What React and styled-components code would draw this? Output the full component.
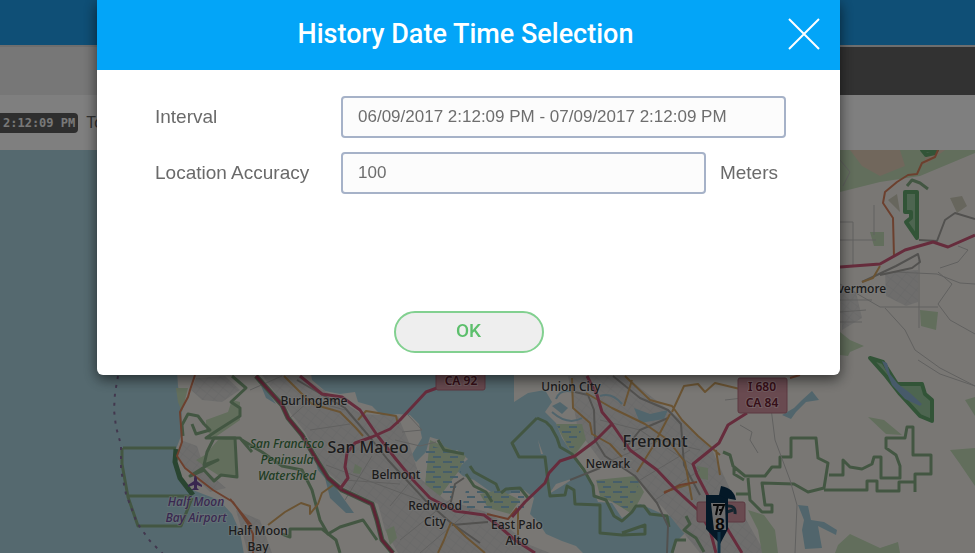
import { useState } from 'react'
import styled, { createGlobalStyle } from 'styled-components'

const GlobalStyle = createGlobalStyle`
    * {
        box-sizing: border-box;
    }
    body {
        margin: 0;
        font-family: "Liberation Sans", Arial, sans-serif;
    }
`
const Page = styled.div`
    display: flex;
    flex-direction: column;
    height: 100vh;
    overflow: hidden;
`
const TopBar = styled.header`
    flex: 0 0 45px;
    background-color: #1e9eec;
`
const Tabs = styled.div`
    flex: 0 0 50px;
    display: flex;
    border-top: 2px solid #dcdcdc;
`
const Tab = styled.div`
    flex: 1;
    background-color: ${props => props.$active ? "#eeeeee" : "#646464"};
`
const RangeBar = styled.div`
    flex: 0 0 55px;
    display: flex;
    align-items: center;
    gap: 8px;
    background-color: #ffffff;
    color: #666;
    font-size: 16px;
`
const Stamp = styled.code`
    padding: 0 3px;
    border-radius: 0 4px 4px 0;
    background-color: #5c5c5c;
    color: #f0f0f0;
    font-family: "DejaVu Sans Mono", monospace;
    font-size: 12px;
    font-weight: 700;
    line-height: 20px;
`
const MapArea = styled.main`
    flex: 1;
    min-height: 0;
    background-color: #aad3df;
`
const MapSvg = styled.svg`
    display: block;
    width: 100%;
    height: 100%;
`
const Place = styled.text`
    font-family: "Noto Sans", sans-serif;
    font-size: ${props => props.$size || 12}px;
    font-style: ${props => props.$italic ? "italic" : "normal"};
    font-weight: ${props => props.$bold ? 600 : 500};
    fill: ${props => props.$color || "#383838"};
    stroke: rgba(255, 255, 255, 0.35);
    stroke-width: 2px;
    paint-order: stroke;
    text-anchor: middle;
`
const Backdrop = styled.div`
    position: fixed;
    inset: 0;
    padding: 0 135px 0 97px;
    background-color: rgba(0, 0, 0, 0.5);
`
const Dialog = styled.form`
    border-radius: 0 0 6px 6px;
    background-color: #ffffff;
    box-shadow: 0 4px 14px rgba(0, 0, 0, 0.6);
    overflow: hidden;
`
const DialogHeader = styled.div`
    display: grid;
    grid-template-columns: 60px 1fr 60px;
    align-items: center;
    height: 70px;
    padding: 0 6px 2px 0;
    background-color: #03a5f8;
    color: #ffffff;
`
const Title = styled.h1`
    grid-column: 2;
    margin: 0;
    font-family: Roboto, sans-serif;
    font-size: 27px;
    font-weight: 500;
    line-height: 32px;
    text-align: center;
`
const CloseButton = styled.button`
    display: flex;
    justify-content: center;
    padding: 0;
    border: none;
    background: none;
    color: inherit;
    cursor: pointer;
`
const DialogBody = styled.div`
    padding: 26px 0 22px;
`
const Fields = styled.div`
    display: grid;
    grid-template-columns: 186px 1fr;
    align-items: center;
    row-gap: 14px;
    padding: 0 54px 0 58px;
    color: #6a6a6a;
    font-size: 19px;
`
const Label = styled.label``
const Field = styled.div`
    display: flex;
    align-items: center;
    gap: 14px;
`
const Input = styled.input`
    flex: 0 0 ${props => props.$short ? "82%" : "100%"};
    min-width: 0;
    height: 42px;
    padding: 0 15px;
    border: 2px solid #a6b2c8;
    border-radius: 4px;
    background-color: #fcfcfc;
    color: #6e6e6e;
    font-family: inherit;
    font-size: 17px;
`
const Unit = styled.span``
const Actions = styled.div`
    display: flex;
    justify-content: center;
    margin-top: 117px;
`
const OkButton = styled.button`
    width: 150px;
    height: 42px;
    padding: 0 0 3px;
    border: 2px solid #82d090;
    border-radius: 21px;
    background-color: #eeeeee;
    color: #5cbf6c;
    font-family: Roboto, sans-serif;
    font-size: 19px;
    font-weight: 500;
    cursor: pointer;
`

const LAND = [
    // peninsula
    "M175 340 L178 386 L182 405 L181 436 L175 452 L178 472 L188 488 L203 494 L219 500 L232 514 L240 532 L245 560 L590 560 L576 546 L562 541 L546 534 L538 522 L530 514 L534 498 L524 490 L508 494 L500 498 L488 490 L474 480 L463 476 L456 470 L468 459 L457 450 L448 455 L440 440 L430 437 L426 452 L416 462 L411 456 L422 438 L419 424 L410 415 L398 414 L382 416 L372 406 L358 402 L355 392 L340 394 L325 391 L312 380 L305 340 Z",
    // east bay
    "M514 340 L514 402 L528 393 L545 390 L552 402 L545 412 L556 423 L562 438 L570 450 L580 468 L590 480 L598 502 L612 503 L622 518 L632 512 L640 504 L667 516 L684 515 L688 530 L676 542 L672 560 L990 560 L990 140 L820 140 L820 340 Z",
    "M549 494 L556 484 L574 478 L562 486 Z",
    "M538 440 L543 454 L541 454 Z",
]
const URBAN = [
    "M262 375 L300 376 L340 400 L362 414 L398 416 L408 440 L420 478 L445 500 L490 513 L530 545 L550 553 L398 553 L385 530 L378 504 L345 488 L325 470 L305 432 L282 402 Z",
    "M196 378 L225 376 L240 390 L222 402 L202 400 L191 390 Z",
    "M181 440 L197 446 L205 470 L226 488 L210 492 L186 468 L178 456 Z",
    "M236 510 L260 520 L272 553 L248 553 Z",
    "M568 376 L625 376 L684 422 L712 450 L735 500 L765 553 L700 553 L665 510 L625 468 L600 460 L578 430 Z",
    "M885 272 L918 270 L918 302 L906 306 L886 296 Z",
    "M840 284 L856 292 L862 318 L842 330 Z",
]
const WOODS = [
    "M206 420 L228 412 L232 400 L240 402 L240 420 L214 438 L206 430 Z",
    "M205 455 L218 440 L234 438 L236 478 L218 475 L207 468 L196 460 Z",
    "M176 388 L188 388 L182 412 L178 402 Z",
    "M840 150 L975 150 L975 153 L920 176 L880 182 L840 192 Z",
    "M868 417 L884 420 L902 435 L886 434 Z",
    "M965 400 L975 397 L975 416 Z",
    "M950 450 L975 448 L975 486 L960 464 Z",
    "M748 510 L764 515 L775 530 L778 553 L762 553 L758 530 Z",
    "M838 545 L850 534 L880 548 L898 542 L900 553 L835 553 Z",
    "M870 232 L884 232 L884 246 L874 246 Z",
    "M920 310 L938 312 L936 330 L921 326 Z",
    "M840 332 L850 340 L864 346 L850 352 L848 356 L840 355 Z",
    "M556 424 L582 424 L586 440 L574 456 L566 444 Z",
    "M596 480 L635 476 L644 492 L632 514 L616 504 L600 496 Z",
    "M430 440 L466 456 L458 472 L440 496 L425 484 Z",
    "M480 494 L500 490 L520 500 L510 514 L488 508 Z",
    "M386 530 L394 526 L397 538 L390 545 Z",
    "M697 466 L708 468 L708 480 L699 478 Z",
    "M355 464 L362 468 L360 474 L353 473 Z",
]
const PARK_LINES = [
    "M123 448 H176 M122 448 L122 464 L128 497 L138 526 H181 L192 498 M128 496 H190",
    "M232 376 L246 388 L231 402 L240 408 L240 416 L218 430 L206 438 L240 438 L252 452",
    "M183 436 L182 425 L188 414 L198 416 L204 424 L210 430 L196 434 L192 424",
    "M190 476 L206 466 L218 460 L204 465 L207 452 L214 438 H235 L237 477 L221 475 L214 481 L204 470 Z",
    "M242 440 L262 452 L282 466 L302 470 L312 490 L320 520 L328 534 L340 527 L363 520 L377 540",
    "M282 534 L290 537 L290 529 L322 529 L336 540 L340 553",
    "M470 466 L474 472 L496 484 L499 491 M501 493 L506 489 L520 488 L528 498",
    "M466 474 L474 486 L486 492 L492 502 M438 440 L444 450 L464 454",
    "M537 418 L512 443 L519 457 L545 457 L548 482 L550 496 L565 495 L567 486 L574 490 L575 504 L600 505 L600 533 L622 535 L645 534 L645 525 L622 533",
    "M537 418 L546 422 L551 427 L557 438 L560 447 L572 454 L584 470 L593 486 L594 496 L606 500 L614 516 L622 521 L632 512 L636 506 L644 506 L650 514 L667 516 L669 527",
    "M686 516 L690 524 L684 530 L696 538 L704 552 M672 553 L676 540 L686 540",
    "M723 452 L730 455 L733 466 L745 476 H765 L772 467 L780 467 L780 457 H791 V438 H816 L818 458 L828 463 L824 488 L808 492 L794 484 L762 483 L765 505 H772 V512 H762 L750 500 L748 478 M734 466 L734 474 L744 480 M736 494 H750",
    "M829 475 H843 V460 L850 467 L862 469 L872 464 L874 457 H881 V478 H900 V466 L896 455 L886 448 V438 H905 L907 427 H913 V455 H931 V474 H915 V492 M914 482 H899 V491 H877 V481 H867 V490 H824",
    "M907 186 L912 180 L920 183 L928 189",
]
const LAKES = [
    "M782 415 L794 408 L802 400 L812 391 L819 400 L806 402 L796 412 L791 419 Z",
    "M798 505 L808 506 L811 520 L824 522 L837 530 L836 535 L818 526 L822 548 L805 549 L802 530 L804 520 Z",
    "M325 478 L336 488 L354 513 L346 513 L330 498 Z",
    "M314 455 L320 462 L328 482 L318 470 Z",
    "M257 376 L276 404 L266 398 Z",
    "M634 408 L650 414 L668 410 L664 419 L640 423 Z",
    "M552 406 L560 402 L568 408 L562 414 Z",
]
const STREETS = "M288 420 L310 400 L345 410 M310 430 L350 424 M326 465 L420 500 M344 480 L400 484 M372 456 L345 500 M390 506 L420 470 M400 540 L450 500 M420 553 L470 510 M250 390 L282 376 M408 415 L422 430 L402 432 M395 440 L420 446 L436 442 M600 420 L640 430 L700 470 M612 460 L660 440 L700 450 M640 480 L690 450 M655 500 L700 470 M740 425 L752 432 L750 440 L758 453 M770 400 L775 440 L790 480 L797 505 L795 553 M725 400 L770 395 M840 222 H853 V265 M840 240 H876 M874 205 V235 M840 284 L868 300 L880 307 H938 M895 272 L937 274 L960 283 L975 284 M919 260 V328 M885 308 L905 330 L915 350 L940 368 L975 386 M938 272 L952 284 L938 304 L950 320 L975 334 M940 268 L958 262 L968 250 L958 246 M840 300 H872 M840 312 L866 310 M840 322 H862 M840 160 L850 172 L843 186 M918 360 L940 374 L975 386"
const RAILS = "M297 380 L345 408 L368 435 L388 460 L425 500 L450 522 L480 543 M575 392 L588 395 L594 410 L595 440 L605 456 L635 476 L657 503 L668 526 L667 553 M613 376 L640 398 L668 410 L681 424 L684 465 L700 495 M624 450 L640 430 L668 418 M862 282 L896 266 L918 254 L920 262 L912 268 L880 275 M919 240 L937 241 L945 220 L955 213 L975 219 M452 525 L488 522 M450 506 L455 484 L464 478 M570 480 L600 468"
const MINOR_ROADS = "M284 376 L312 404 L340 412 L356 428 L363 436 M358 420 L366 411 L396 416 L398 424 M268 525 L285 512 L301 503 L310 506 L310 514 L318 504 L322 493 L336 483 M451 522 L444 540 L438 553 M453 524 L466 537 L485 553 M572 378 L573 408 L590 423 L592 434 L610 444 L622 457 M586 393 L612 408 L645 424 L668 440 L685 462 L692 500 M625 376 L650 400 L672 406 L682 420 L698 436 L720 455 M632 380 L624 406 M670 414 L652 448 L637 472 M672 412 L684 386 L698 384 L705 392 L715 383 L740 389 M664 492 L690 484 M862 282 L873 278 L880 266 M716 450 L720 475 M518 510 L518 535"
const SECONDARY_ROADS = "M195 375 L190 390 L188 397 L180 412 L181 426 L182 442 L177 456 L185 468 L200 480 L213 490 L233 502 L248 524 L253 534 L253 553 M230 499 L252 526 M938 150 L935 157 L922 163 L917 174 L908 175 L897 182 L885 192 L883 203 L893 218 L894 257 M487 514 L508 519 L517 508 M664 493 L680 485 L697 482 M790 378 L800 375"
const MOTORWAYS = "M300 376 L322 394 L342 397 L360 410 L377 435 L395 458 L413 480 L430 498 L455 511 L484 515 L500 527 L515 540 L535 553 M437 388 L426 392 L400 420 L390 429 L372 437 L355 443 L347 453 L345 467 L348 478 L340 489 M587 376 L597 395 L602 412 L612 424 L630 450 L657 470 L675 489 L698 510 L710 530 L716 553 M612 424 L595 441 L575 456 L560 461 L549 473 L545 483 L525 502 L512 517 M747 413 L728 425 L719 443 L693 464 L697 475 L708 496 L725 525 L742 553 M840 267 L880 264 L905 250 L933 242 L948 247 L975 235"
const SKYLINE_FREEWAY = "M256 376 L282 405 L288 418 L302 435 L318 462 L328 478 L342 490 L355 496 L372 504 L377 520 L382 540 L393 553"

const LINE_STEP = 16

const places = [
    { x: 314, y: 405, lines: ["Burlingame"] },
    { x: 368, y: 453, lines: ["San Mateo"], size: 16 },
    { x: 396, y: 479, lines: ["Belmont"] },
    { x: 435, y: 510, lines: ["Redwood", "City"] },
    { x: 517, y: 529, lines: ["East Palo", "Alto"] },
    { x: 571, y: 391, lines: ["Union City"] },
    { x: 655, y: 447, lines: ["Fremont"], size: 16 },
    { x: 608, y: 468, lines: ["Newark"] },
    { x: 258, y: 535, lines: ["Half Moon", "Bay"] },
    { x: 857, y: 293, lines: ["Livermore"] },
    { x: 287, y: 448, lines: ["San Francisco", "Peninsula", "Watershed"], color: "#3d7a44", italic: true },
    { x: 196, y: 506, lines: ["Half Moon", "Bay Airport"], color: "#7350a0", italic: true },
]

const Shields = () => (
    <g>
        <g fill="#d294a0" stroke="#b87080">
            <rect x="436" y="366" width="49" height="24" rx="2" />
            <rect x="738" y="378" width="49" height="35" rx="2" />
            <rect x="697" y="502" width="48" height="20" rx="2" />
        </g>
        <Place x="461" y="385" $bold $color="#6e1c30">CA 92</Place>
        <Place x="762" y="391" $bold $color="#6e1c30">I 680</Place>
        <Place x="762" y="407" $bold $color="#6e1c30">CA 84</Place>
    </g>
)

const VehiclePin = () => (
    <g>
        <path d="M727 506 Q736 505 735 514 M727 512 L733 510" fill="none" stroke="#2a4a5c" strokeWidth="3" />
        <path d="M706 495 H728 V529 L720 544 L706 529 Z" fill="#08304e" />
        <path d="M719 495 L721 486 Q734 488 736 500 L725 498 Z" fill="#08304e" />
        <path d="M719 532 V553" stroke="#286c92" strokeWidth="3" />
        <path d="M711 503 H725 L726 530 H714 Z" fill="#d8d8d8" />
        <path d="M713 505 H718 L716 515 M718 505 H724 L720 515 M719 510 H723" fill="none" stroke="#111111" strokeWidth="2" />
        <text x="720" y="530" textAnchor="middle" fontFamily="Liberation Sans, sans-serif" fontSize="17" fontWeight="700" fill="#111111">8</text>
    </g>
)

const BayMap = () => (
    <MapSvg viewBox="0 150 975 403" preserveAspectRatio="xMidYMin slice" role="img" aria-label="Map">
        <defs>
            <pattern id="blocks" width="9" height="7" patternUnits="userSpaceOnUse" patternTransform="rotate(38)">
                <rect width="9" height="7" fill="#dcdbd9" />
                <path d="M0 0 H9 M0 0 V7" stroke="#d0cfcf" strokeWidth="1" />
            </pattern>
            <pattern id="marsh" width="17" height="10" patternUnits="userSpaceOnUse">
                <path d="M1 2 H10 M8 7 H16" stroke="#8dbdd4" strokeWidth="2" />
            </pattern>
        </defs>
        <g fill="#f2efe9">
            {LAND.map((d) => <path key={d} d={d} />)}
        </g>
        <g fill="url(#blocks)">
            {URBAN.map((d) => <path key={d} d={d} />)}
        </g>
        <g fill="#c4dcb8">
            {WOODS.map((d) => <path key={d} d={d} />)}
        </g>
        <path d="M850 150 L900 150 L905 166 L880 176 L862 166 Z M925 150 L945 150 L925 165 Z" fill="#e2cfb8" />
        <path d="M950 198 L962 196 L967 206 L957 213 Z M888 200 L897 194 L900 212 Z" fill="#cfccba" />
        <path d="M425 444 L466 456 L452 500 L425 486 Z M596 478 H640 L630 512 L600 494 Z M556 424 H584 L572 452 Z M466 490 H524 V508 H462 Z" fill="url(#marsh)" />
        <path d="M600 396 Q612 392 622 404 M552 412 Q568 426 582 418 M556 399 Q560 388 574 392" fill="none" stroke="#a0c8d8" strokeWidth="2" />
        <g fill="none" stroke="#86ad84" strokeWidth="3" strokeLinejoin="round">
            {PARK_LINES.map((d) => <path key={d} d={d} />)}
        </g>
        <path d="M176 449 L175 462 L180 478 L193 495" fill="none" stroke="#538a63" strokeWidth="5" />
        <g fill="#9bcaa0" stroke="#65a86f" strokeWidth="4" strokeLinejoin="round">
            <path d="M905 192 H917 V238 L906 222 L911 218 V212 H905 Z" />
            <path d="M922 150 L926 155 L935 153 L937 150 Z" />
            <path d="M870 358 L883 362 L897 384 L922 384 L925 394 L932 400 V421 L920 416 L900 394 L886 376 Z" />
        </g>
        <path d="M882 361 L887 363 L890 374 L898 384 L910 393 L922 404 L920 406 L905 399 L892 385 Z" fill="#8fb4d4" />
        <g fill="#a3cbd8">
            {LAKES.map((d) => <path key={d} d={d} />)}
        </g>
        <g fill="none" strokeLinejoin="round">
            <path d="M118 376 L115 393 L114 410 L116 427 L121 445 L121 470 L126 494 L137 523 L150 541 L164 555" stroke="#85709c" strokeWidth="2" strokeDasharray="3 6" />
            <path d={STREETS} stroke="#c2c1bf" strokeWidth="1" />
            <path d={RAILS} stroke="#a4a29e" strokeWidth="2" />
            <path d={MINOR_ROADS} stroke="#d4a766" strokeWidth="2" />
            <path d={SECONDARY_ROADS} stroke="#d9805c" strokeWidth="2" />
            <path d={SKYLINE_FREEWAY} stroke="#7fa381" strokeWidth="5" />
            <path d={SKYLINE_FREEWAY} stroke="#b84a68" strokeWidth="3" />
            <path d={MOTORWAYS} stroke="#cc5878" strokeWidth="3" />
        </g>
        <path d="M195 475 L197 478 V481 L202 485 V487 L197 485 V488 L199 490 H191 L194 488 V485 L188 487 V485 L194 481 V478 Z" fill="#7350a0" />
        {places.map((place) => place.lines.map((line, i) => (
            <Place
                key={place.x + line}
                x={place.x}
                y={place.y + i * LINE_STEP}
                $size={place.size}
                $color={place.color}
                $italic={place.italic}
            >
                {line}
            </Place>
        )))}
        <Shields />
        <VehiclePin />
    </MapSvg>
)

const App = () => {
    const [interval, setInterval] = useState('06/09/2017 2:12:09 PM - 07/09/2017 2:12:09 PM')
    const [accuracy, setAccuracy] = useState('100')

    return (
        <Page>
            <GlobalStyle />
            <TopBar />
            <Tabs>
                <Tab $active />
                <Tab />
            </Tabs>
            <RangeBar>
                <Stamp>2:12:09 PM</Stamp>
                <span>To</span>
            </RangeBar>
            <MapArea>
                <BayMap />
            </MapArea>
            <Backdrop>
                <Dialog role="dialog" aria-labelledby="dialog-title" onSubmit={(e) => e.preventDefault()}>
                    <DialogHeader>
                        <Title id="dialog-title">History Date Time Selection</Title>
                        <CloseButton type="button" aria-label="Close">
                            <svg width="32" height="32" viewBox="0 0 32 32" fill="none" stroke="currentColor" strokeWidth="2">
                                <path d="M1 1 L31 31 M31 1 L1 31" />
                            </svg>
                        </CloseButton>
                    </DialogHeader>
                    <DialogBody>
                        <Fields>
                            <Label htmlFor="interval">Interval</Label>
                            <Field>
                                <Input id="interval" value={interval} onChange={(e) => setInterval(e.target.value)} />
                            </Field>
                            <Label htmlFor="accuracy">Location Accuracy</Label>
                            <Field>
                                <Input id="accuracy" $short value={accuracy} onChange={(e) => setAccuracy(e.target.value)} />
                                <Unit>Meters</Unit>
                            </Field>
                        </Fields>
                        <Actions>
                            <OkButton type="submit">OK</OkButton>
                        </Actions>
                    </DialogBody>
                </Dialog>
            </Backdrop>
        </Page>
    )
}

export default App
